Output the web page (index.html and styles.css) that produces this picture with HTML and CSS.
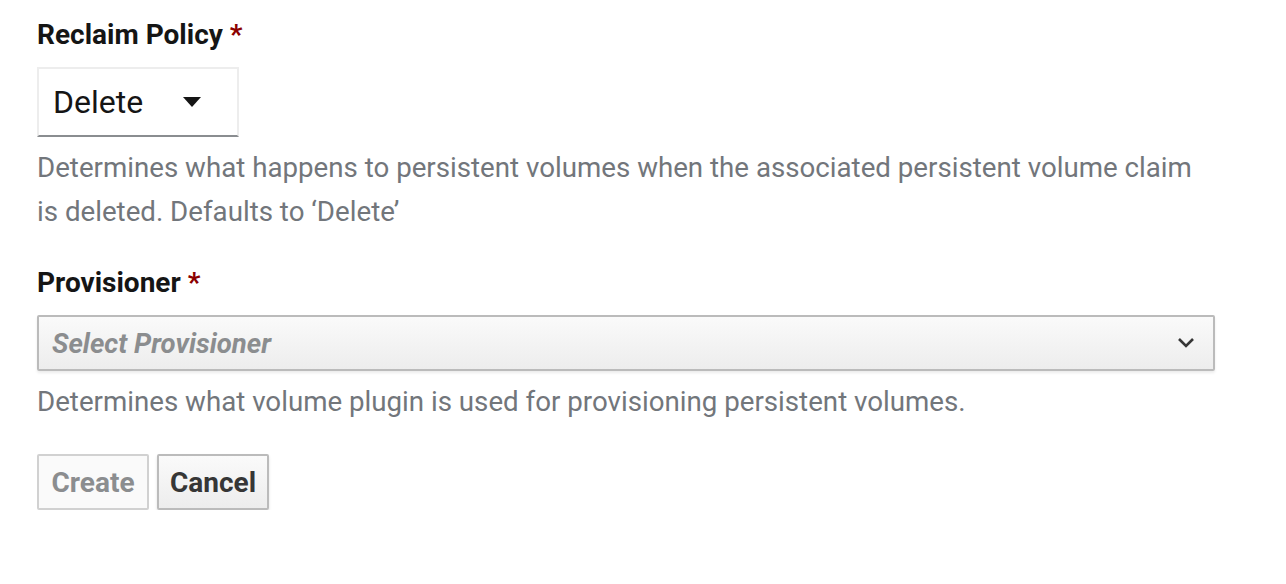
FILE: index.html
```html
<!DOCTYPE html>
<html>
<head>
<meta charset="utf-8">
<link rel="stylesheet" href="styles.css">
</head>
<body>
<form class="form">
  <div class="group">
    <label class="label">Reclaim Policy <span class="req">*</span></label>
    <div class="dropdown">
      <span class="dd-text">Delete</span>
      <svg class="caret" width="18" height="10" viewBox="0 0 18 10"><path d="M0 0 H18 L9 10 Z" fill="#151515"/></svg>
    </div>
    <p class="help">Determines what happens to persistent volumes when the associated persistent volume claim is deleted. Defaults to ‘Delete’</p>
  </div>
  <div class="group">
    <label class="label">Provisioner <span class="req">*</span></label>
    <div class="select">
      <span class="placeholder">Select Provisioner</span>
      <svg class="chev" width="18" height="12" viewBox="0 0 18 12"><path d="M2 2 L9 9 L16 2" fill="none" stroke="#363636" stroke-width="2.6"/></svg>
    </div>
    <p class="help">Determines what volume plugin is used for provisioning persistent volumes.</p>
  </div>
  <div class="buttons">
    <button type="button" class="btn btn-disabled">Create</button>
    <button type="button" class="btn btn-default">Cancel</button>
  </div>
</form>
</body>
</html>
```

FILE: styles.css
```css
html, body {
  margin: 0;
  padding: 0;
  background: #fff;
}
body {
  font-family: Roboto, "Liberation Sans", sans-serif;
  color: #363636;
}
.form {
  padding: 13px 0 0 37px;
  width: 1178px;
}
.group {
  margin-bottom: 27px;
}
.label {
  display: block;
  font-size: 28px;
  line-height: 44px;
  font-weight: 700;
  color: #151515;
  margin-bottom: 10px;
}
.req {
  color: #8b0000;
}
.dropdown {
  box-sizing: border-box;
  width: 202px;
  height: 70px;
  border: 2px solid #ededed;
  border-bottom-color: #8a8d90;
  display: flex;
  align-items: center;
  justify-content: space-between;
  padding: 0 36px 0 14px;
}
.dd-text {
  font-size: 32px;
  color: #151515;
}
.help {
  margin: 9px 0 0;
  font-size: 27.7px;
  line-height: 44px;
  color: #72767b;
}
.select {
  box-sizing: border-box;
  width: 1178px;
  height: 56px;
  border: 2px solid #bbb;
  border-radius: 2px;
  background: linear-gradient(#fafafa, #ededed);
  box-shadow: 0 2px 3px rgba(3,3,3,0.08);
  display: flex;
  align-items: center;
  justify-content: space-between;
  padding: 0 18px 0 13px;
}
.placeholder {
  font-size: 27.5px;
  font-style: italic;
  font-weight: 700;
  color: #8b8d8f;
}
.buttons {
  display: flex;
  gap: 8px;
  padding-top: 3px;
}
.btn {
  box-sizing: border-box;
  width: 112px;
  height: 56px;
  font-family: inherit;
  font-size: 28px;
  font-weight: 700;
  border-radius: 2px;
  padding: 0;
}
.btn-disabled {
  background: #fafafa;
  border: 2px solid #d1d1d1;
  color: #8b8d8f;
}
.btn-default {
  background: linear-gradient(#fafafa, #ededed);
  border: 2px solid #bbb;
  color: #363636;
  box-shadow: 0 2px 3px rgba(3,3,3,0.12);
}
```
